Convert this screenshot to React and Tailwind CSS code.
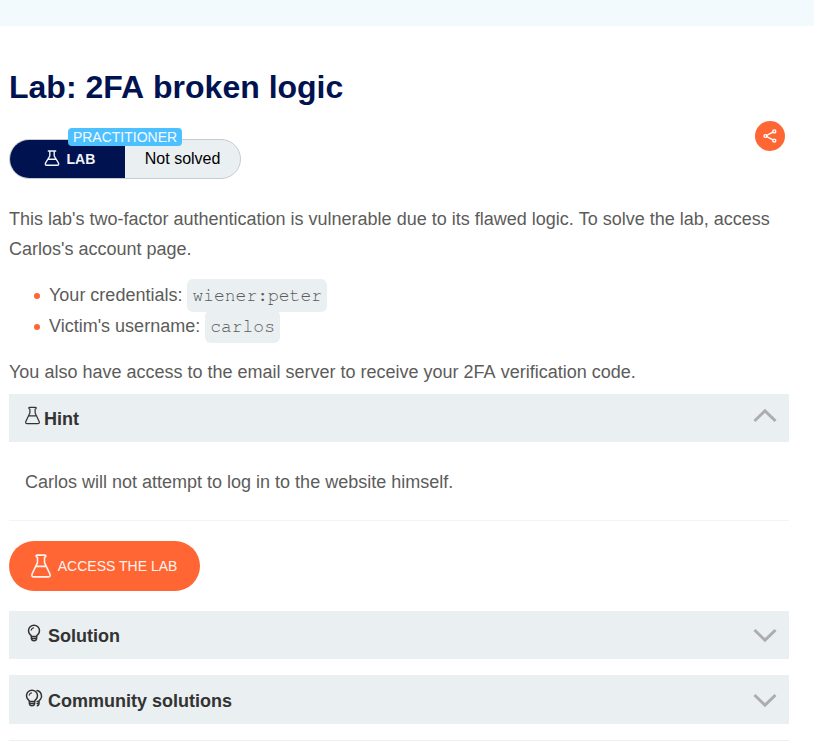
import React from 'react';

function Flask({ className, viewBox = '0 0 16 19', d, stroke = 1.2 }) {
  return (
    <svg className={className} viewBox={viewBox} fill="none" stroke="currentColor" strokeWidth={stroke} strokeLinejoin="round" strokeLinecap="round">
      <path d={d} />
    </svg>
  );
}

const TALL_FLASK = 'M5 .8H11Q12 .8 11.9 1.7Q11.8 2.4 10.8 2.6V6.8L15 15.6Q16 18.2 13.6 18.2H2.4Q0 18.2 1 15.6L5.2 6.8V2.6Q4.2 2.4 4.1 1.7Q4 .8 5 .8ZM3.9 9.8H12.1';

function Bulb({ double = false }) {
  return (
    <svg className="block h-[19px] w-[19px]" viewBox="0 0 19 19" fill="none" stroke="#333332" strokeWidth="1.5" strokeLinecap="round" strokeLinejoin="round">
      <path d="M4.4 12.5Q4.3 11.4 3 10.4A5.5 5.5 0 1 1 11 10.4Q9.7 11.4 9.6 12.5Z" />
      <path d="M4.4 12.6V14.8Q4.8 16.8 7 16.8Q9.2 16.8 9.6 14.8V12.6M4.5 14.6H9.5" />
      <path d="M4.2 6.2Q4.6 4.3 6.5 3.9" strokeWidth="1.2" />
      {double && <path d="M12 1.5A5.6 5.6 0 0 1 15.4 10.4Q14.1 11.4 14 12.5H12.1M14 12.6V14.8Q13.8 16.2 12.3 16.8M12.1 14.6H13.9" />}
    </svg>
  );
}

function Chevron({ up = false }) {
  return (
    <svg className="block h-[15px] w-6" viewBox="0 0 24 15" fill="none" stroke="#adadad" strokeWidth="3">
      <path d={up ? 'M1.5 13L12 2.8L22.5 13' : 'M1.5 2L12 12.2L22.5 2'} />
    </svg>
  );
}

export default function App() {
  return (
    <div className="h-[747px] w-[814px] overflow-hidden bg-white font-['Liberation_Sans',Arial,sans-serif] text-[18px] leading-[30px] text-[#5c5c5a]">
      <div className="h-[26px] bg-[#f2fafd]" />
      <main className="ml-[9px] w-[780px]">
        <h1 className="pt-[41px] text-[32px] leading-10 font-bold text-[#001350]">Lab: <span className="mr-[0.04px]">2FA</span> broken logic</h1>

        <div className="mt-[14px] flex h-[58px] items-start justify-between">
          <div className="relative mt-[18px] flex h-10 w-[232px] overflow-visible rounded-full border border-[#c5cdd2] bg-[#eaeff2]">
            <div className="flex w-[115px] items-center rounded-l-full bg-[#001350] pl-[34px] text-[14px] font-bold text-[#f2f5f8]">
              <Flask className="mr-[6.5px] -mt-[2px] h-4 w-4" viewBox="0 0 16 16" stroke={1.4} d="M4.3 1H11.7M5.8 1V6L1.6 12.9Q.7 15.2 2.7 15.2H13.3Q15.3 15.2 14.4 12.9L10.2 6V1M4 9.3H12" />
              LAB
            </div>
            <div className="flex items-center pl-[19.8px] text-[16px] whitespace-nowrap text-black">Not solved</div>
            <span className="absolute -top-3 left-[58px] h-[18px] w-[114px] rounded-[4px] bg-[#4dc0ff] text-center text-[14px] leading-[19px] text-[#f5faff]">PRACTITIONER</span>
          </div>
          <div className="mr-1 flex size-[30px] items-center justify-center rounded-full bg-[#ff6633]">
            <svg className="h-4 w-4" viewBox="0 0 16 16" fill="none" stroke="white" strokeWidth="1.4">
              <circle cx="3.4" cy="8" r="1.4" /><circle cx="12.3" cy="3.4" r="1.5" /><circle cx="12.3" cy="12.6" r="1.5" />
              <path d="M4.7 7.3L11 4.1M4.7 8.7L11 11.9" />
            </svg>
          </div>
        </div>

        <p className="mt-[25px]">This lab's two-factor authentication is vulnerable due to its flawed logic. <span className="ml-[0.04px]">To</span> solve the lab, access Carlos's account page.</p>
        <ul className="mt-[15px]">
          <li className="flex h-[33px] items-center pl-[25px]">
            <span className="mr-[9px] size-[6px] rounded-full bg-[#ff6633]" />
            <span className="-mt-[2px]">Your credentials:</span>
            <code className="ml-[5px] h-[33px] rounded-[6px] bg-[#eaeff2] px-[5px] font-['Courier_10_Pitch','FreeMono','Courier',monospace] leading-[34px]">wiener:peter</code>
          </li>
          <li className="-mt-[2px] flex h-[33px] items-center pl-[25px]">
            <span className="mr-[9px] size-[6px] rounded-full bg-[#ff6633]" />
            <span className="-mt-[2px]">Victim's username:</span>
            <code className="ml-[5px] h-[33px] rounded-[6px] bg-[#eaeff2] px-[5px] font-['Courier_10_Pitch','FreeMono','Courier',monospace] leading-[34px]">carlos</code>
          </li>
        </ul>
        <p className="mt-[14px]">You also have access to the email server to receive your <span className="mr-[0.04px]">2FA</span> verification code.</p>

        <div className="mt-[7px] flex h-12 items-center bg-[#eaeff2] pr-3 pl-4 font-bold text-[#333332]">
          <Flask className="mr-1 -mt-[5px] h-[19px] w-[15px]" d={TALL_FLASK} stroke={1.3} />
          <span className="flex-1 pt-[2px]">Hint</span>
          <div className="-mt-[6px]"><Chevron up /></div>
        </div>
        <p className="mt-[25px] pl-4">Carlos will not attempt to log in to the website himself.</p>
        <div className="mt-[23px] h-px bg-[#f3f4f5]" />

        <button className="mt-5 flex h-[50px] w-[191px] items-center rounded-full bg-[#ff6633] pl-[21.6px] text-[14px] text-[#fff3ef]">
          <Flask className="mr-[7.2px] h-6 w-5" viewBox="0 0 16 19" stroke={1.25} d={TALL_FLASK} />
          <span className="whitespace-nowrap">ACCESS THE LAB</span>
        </button>

        <div className="mt-5 flex h-12 items-center bg-[#eaeff2] pr-3 pl-[18px] font-bold text-[#333332]">
          <div className="mr-[2px] -mt-[3px]"><Bulb /></div>
          <span className="flex-1 pt-[2px]">Solution</span>
          <Chevron />
        </div>
        <div className="mt-4 flex h-[49px] items-center bg-[#eaeff2] pr-3 pl-4 font-bold text-[#333332]">
          <div className="mr-1 -mt-[3px]"><Bulb double /></div>
          <span className="flex-1 pt-[3px]">Community solutions</span>
          <div className="pt-[2px]"><Chevron /></div>
        </div>
        <div className="mt-4 h-px bg-[#eeeff0]" />
      </main>
    </div>
  );
}
